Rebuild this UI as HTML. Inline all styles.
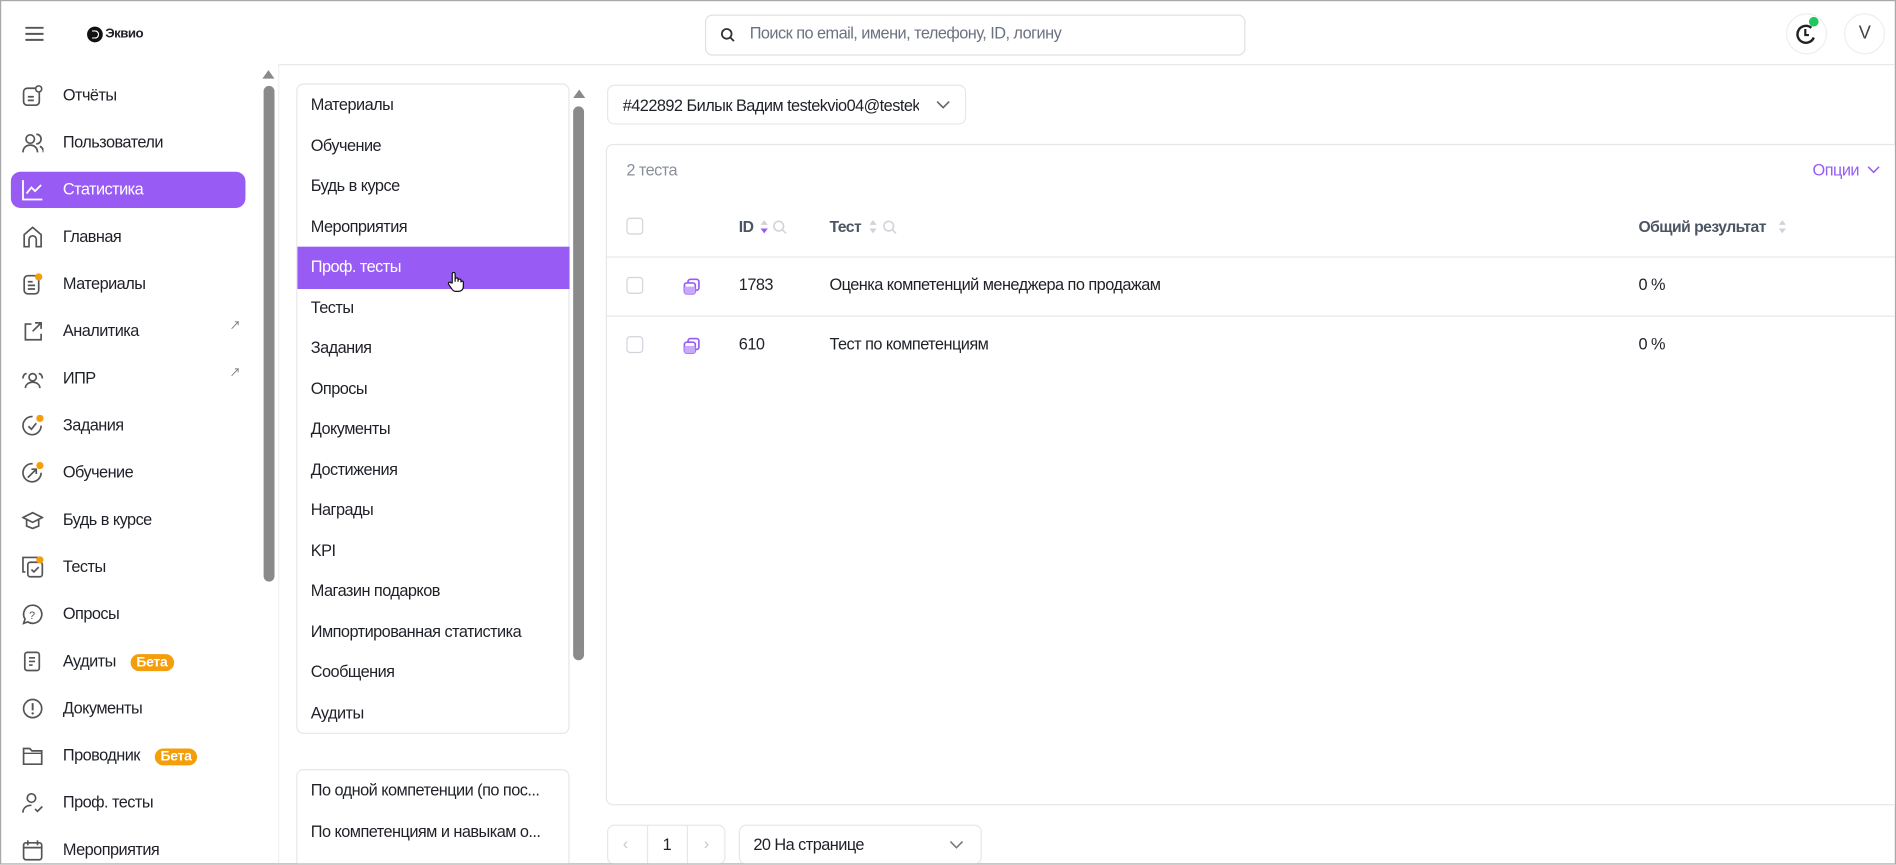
<!DOCTYPE html>
<html><head><meta charset="utf-8"><style>
*{box-sizing:border-box;margin:0;padding:0}
html,body{width:1896px;height:865px;overflow:hidden;background:#fff}
#w{position:absolute;left:0;top:0;width:1568px;height:715px;transform:scale(1.20918);transform-origin:0 0;font-family:"Liberation Sans","Noto Sans CJK SC",sans-serif;color:#1f2128;font-size:13.5px;letter-spacing:-0.45px;border:1px solid #a9a9a9;overflow:hidden}
.a{position:absolute}
.nav{position:absolute;left:8px;width:194px;height:30px;border-radius:8px}
.nav svg{position:absolute;left:9px;top:6px}
.nav > span{position:absolute;left:43px;top:7px;white-space:nowrap}
.beta{display:inline-block;background:#f59e0b;color:#fff;font-size:11.5px;font-weight:bold;border-radius:9px;padding:1px 5px;margin-left:8px;letter-spacing:-0.2px}
.li{position:absolute;left:11px}
.bx{position:absolute;border:1px solid #e5e7eb;border-radius:6px;background:#fff}
.cb{position:absolute;width:14px;height:14px;border:1px solid #d1d5db;border-radius:3px;background:#fff}
.hl{position:absolute;left:0;right:0;height:1px;background:#e5e7eb}
</style></head><body><div id="w">
<svg class="a" style="left:19px;top:20px" width="17" height="14"><path d="M1 2h15M1 7h15M1 12h15" stroke="#555" stroke-width="1.6"/></svg>
<div class="a" style="left:71px;top:21px;width:13px;height:13px;border-radius:50%;background:#111"></div>
<div class="a" style="left:75px;top:24px;width:6px;height:7px;border:1.5px solid #fff;border-left:none;border-radius:0 4px 4px 0"></div>
<div class="a" style="left:86px;top:21px;font-size:11px;font-weight:bold">Эквио</div>
<div class="bx" style="left:582px;top:11px;width:447px;height:34px;border-color:#dfe1e5"></div>
<svg class="a" style="left:595px;top:22px" width="12" height="12"><circle cx="5" cy="5" r="4" fill="none" stroke="#333" stroke-width="1.5"/><path d="M8 8l3 3" stroke="#333" stroke-width="1.5"/></svg>
<div class="a" style="left:619px;top:19px;color:#6b7280">Поиск по email, имени, телефону, ID, логину</div>
<div class="a" style="left:1476px;top:10px;width:34px;height:34px;border-radius:50%;border:1px solid #eceef0"></div>
<svg class="a" style="left:1484px;top:18px" width="18" height="18"><path d="M13 4A7 7 0 1 0 15 12" fill="none" stroke="#222" stroke-width="2"/><path d="M8 5v5h3" fill="none" stroke="#222" stroke-width="1.8"/></svg>
<div class="a" style="left:1495px;top:13px;width:8px;height:8px;border-radius:50%;background:#22c55e"></div>
<div class="a" style="left:1524px;top:10px;width:34px;height:34px;border-radius:50%;border:1px solid #eceef0;text-align:center;line-height:32px;font-size:15px;color:#444">V</div>
<div class="a" style="left:229px;top:52px;width:1340px;height:1px;background:#e5e7eb"></div>
<div class="a" style="left:229px;top:52px;width:1px;height:670px;background:#eef0f2"></div>
<div class="a" style="left:216px;top:57px;width:0;height:0;border-left:5px solid transparent;border-right:5px solid transparent;border-bottom:7px solid #8a8a8a"></div>
<div class="a" style="left:217px;top:70px;width:9px;height:410px;border-radius:5px;background:#8a8a8a"></div>
<div class="nav" style="top:63px"><svg width="18" height="18"><rect x="1.5" y="3" width="13" height="14" rx="3" fill="none" stroke="#555" stroke-width="1.4"/><path d="M5 10h5M5 13h5" stroke="#555" stroke-width="1.4"/><circle cx="14" cy="3.5" r="2.5" fill="#fff" stroke="#555" stroke-width="1.3"/></svg><span>Отчёты</span></div>
<div class="nav" style="top:102px"><svg width="18" height="18"><circle cx="7" cy="6" r="3.5" fill="none" stroke="#555" stroke-width="1.4"/><path d="M1 17c0-4 3-6 6-6s6 2 6 6M12 2a4 4 0 0 1 0 8M15 12c2 1 3 3 3 5" fill="none" stroke="#555" stroke-width="1.4"/></svg><span>Пользователи</span></div>
<div class="nav" style="top:141px;background:#985cf5;color:#fff"><svg width="18" height="18"><path d="M1 1v16h16M4 12l4-5 3 3 5-5" fill="none" stroke="#fff" stroke-width="1.5"/></svg><span>Статистика</span></div>
<div class="nav" style="top:180px"><svg width="18" height="18"><path d="M2 17V7l7-6 7 6v10h-4v-6a3 3 0 0 0-6 0v6z" fill="none" stroke="#555" stroke-width="1.4"/></svg><span>Главная</span></div>
<div class="nav" style="top:219px"><svg width="18" height="18"><rect x="2" y="2" width="12" height="15" rx="3" fill="none" stroke="#555" stroke-width="1.4"/><path d="M5 7h4M5 10h6M5 13h6" stroke="#555" stroke-width="1.4"/><circle cx="14" cy="3" r="3" fill="#f59e0b"/></svg><span>Материалы</span></div>
<div class="nav" style="top:258px"><svg width="18" height="18"><path d="M8 3H3v13h13v-5M11 2h5v5M16 2l-7 7" fill="none" stroke="#555" stroke-width="1.4"/></svg><span>Аналитика</span></div>
<div class="a" style="left:189px;top:261px;font-size:9px;color:#666">↗</div>
<div class="nav" style="top:297px"><svg width="18" height="18"><circle cx="9" cy="8" r="3" fill="none" stroke="#555" stroke-width="1.4"/><path d="M3 17c0-3 3-5 6-5s6 2 6 5M1 9c0-2 1-4 3-4M17 9c0-2-1-4-3-4" fill="none" stroke="#555" stroke-width="1.4"/></svg><span>ИПР</span></div>
<div class="a" style="left:189px;top:300px;font-size:9px;color:#666">↗</div>
<div class="nav" style="top:336px"><svg width="18" height="18"><path d="M16 9A7.5 7.5 0 1 1 9 1.5" fill="none" stroke="#555" stroke-width="1.4"/><path d="M5.5 9.5l2.5 2.5 4-5" fill="none" stroke="#555" stroke-width="1.4"/><circle cx="15" cy="3" r="3" fill="#f59e0b"/></svg><span>Задания</span></div>
<div class="nav" style="top:375px"><svg width="18" height="18"><path d="M16 9A7.5 7.5 0 1 1 9 1.5" fill="none" stroke="#555" stroke-width="1.4"/><path d="M5 13l7-7M8 6h4v4" fill="none" stroke="#555" stroke-width="1.4"/><circle cx="15" cy="3" r="3" fill="#f59e0b"/></svg><span>Обучение</span></div>
<div class="nav" style="top:414px"><svg width="18" height="18"><path d="M1 7l8-4 8 4-8 4zM4 9v5l5 2 5-2V9" fill="none" stroke="#555" stroke-width="1.4"/></svg><span>Будь в курсе</span></div>
<div class="nav" style="top:453px"><svg width="18" height="18"><path d="M3 13H1V1h12v2" fill="none" stroke="#555" stroke-width="1.4"/><rect x="5" y="5" width="12" height="12" rx="2" fill="none" stroke="#555" stroke-width="1.4"/><path d="M8 11l2 2 4-4" fill="none" stroke="#555" stroke-width="1.4"/><circle cx="15" cy="3" r="3" fill="#f59e0b"/></svg><span>Тесты</span></div>
<div class="nav" style="top:492px"><svg width="18" height="18"><path d="M9 1.5a7.5 7.5 0 1 1-4 13.8L1.5 16.5 2.7 13A7.5 7.5 0 0 1 9 1.5z" fill="none" stroke="#555" stroke-width="1.4"/><text x="6" y="13" font-size="9" fill="#555" font-family="Liberation Sans">?</text></svg><span>Опросы</span></div>
<div class="nav" style="top:531px"><svg width="18" height="18"><rect x="2.5" y="1.5" width="12" height="15" rx="2" fill="none" stroke="#555" stroke-width="1.4"/><path d="M6 6h5M6 9h5M6 12h3" stroke="#555" stroke-width="1.4"/></svg><span>Аудиты<b class="beta" style="margin-left:12px">Бета</b></span></div>
<div class="nav" style="top:570px"><svg width="18" height="18"><circle cx="9" cy="9" r="7.5" fill="none" stroke="#555" stroke-width="1.4"/><path d="M9 4.5v6" stroke="#555" stroke-width="1.6"/><circle cx="9" cy="13" r="1" fill="#555"/></svg><span>Документы</span></div>
<div class="nav" style="top:609px"><svg width="18" height="18"><path d="M1.5 3h5l2 2h8v11h-15z" fill="none" stroke="#555" stroke-width="1.4"/><path d="M1.5 7h15" stroke="#555" stroke-width="1.2"/></svg><span>Проводник<b class="beta" style="margin-left:12px">Бета</b></span></div>
<div class="nav" style="top:648px"><svg width="18" height="18"><circle cx="8" cy="5" r="3.5" fill="none" stroke="#555" stroke-width="1.4"/><path d="M1 17c0-4 3-6 7-6M11 14l2 2 4-4" fill="none" stroke="#555" stroke-width="1.4"/></svg><span>Проф. тесты</span></div>
<div class="nav" style="top:687px"><svg width="18" height="18"><rect x="1.5" y="3" width="15" height="14" rx="2" fill="none" stroke="#555" stroke-width="1.4"/><path d="M1.5 7h15M5 1v4M13 1v4" stroke="#555" stroke-width="1.4"/></svg><span>Мероприятия</span></div>
<div class="bx" style="left:244px;top:68px;width:226px;height:538px">
<div class="li" style="top:9px">Материалы</div>
<div class="li" style="top:43px">Обучение</div>
<div class="li" style="top:76px">Будь в курсе</div>
<div class="li" style="top:110px">Мероприятия</div>
<div class="a" style="left:0;top:134px;width:225px;height:35px;background:#985cf5;color:#fff;padding:9px 11px">Проф. тесты</div>
<svg class="a" style="left:124px;top:154px" width="14" height="18"><path d="M4 10V2.5a1.2 1.2 0 0 1 2.4 0V9V7a1.2 1.2 0 0 1 2.4 0v2V8a1.2 1.2 0 0 1 2.4 0v1.5a1 1 0 0 1 2 0V13c0 2.5-2 4-4 4H7c-2 0-3-1-4-3L1 11a1 1 0 0 1 2-1z" fill="#fff" stroke="#111" stroke-width="1"/></svg>
<div class="li" style="top:177px">Тесты</div>
<div class="li" style="top:210px">Задания</div>
<div class="li" style="top:244px">Опросы</div>
<div class="li" style="top:277px">Документы</div>
<div class="li" style="top:311px">Достижения</div>
<div class="li" style="top:344px">Награды</div>
<div class="li" style="top:378px">KPI</div>
<div class="li" style="top:411px">Магазин подарков</div>
<div class="li" style="top:445px">Импортированная статистика</div>
<div class="li" style="top:478px">Сообщения</div>
<div class="li" style="top:512px">Аудиты</div>
</div>
<div class="a" style="left:473px;top:73px;width:0;height:0;border-left:5px solid transparent;border-right:5px solid transparent;border-bottom:7px solid #8a8a8a"></div>
<div class="a" style="left:473px;top:87px;width:9px;height:458px;border-radius:5px;background:#8a8a8a"></div>
<div class="bx" style="left:244px;top:635px;width:226px;height:100px">
<div class="li" style="top:9px">По одной компетенции (по пос...</div>
<div class="li" style="top:43px">По компетенциям и навыкам о...</div>
</div>
<div class="bx" style="left:501px;top:69px;width:297px;height:33px"><div class="a" style="left:12px;top:9px;width:245px;overflow:hidden;white-space:nowrap">#422892 Билык Вадим testekvio04@testekvio</div>
<svg class="a" style="left:271px;top:12px" width="12" height="8"><path d="M1 1l5 5 5-5" fill="none" stroke="#666" stroke-width="1.3"/></svg></div>
<div class="bx" style="left:500px;top:118px;width:1080px;height:547px;border-radius:6px 0 0 6px">
<div class="a" style="left:16px;top:13px;color:#8a8f98">2 теста</div>
<div class="a" style="left:997px;top:13px;color:#985cf5">Опции</div>
<svg class="a" style="left:1042px;top:17px" width="11" height="7"><path d="M1 1l4.5 4.5L10 1" fill="none" stroke="#985cf5" stroke-width="1.3"/></svg>
<div class="cb" style="left:16px;top:60px"></div>
<div class="a" style="left:109px;top:60px;color:#4b5563;font-weight:bold;font-size:13px">ID</div>
<svg class="a" style="left:126px;top:61px" width="24" height="14"><path d="M1 5l3-4 3 4z" fill="#cfd3da"/><path d="M1 8l3 4 3-4z" fill="#985cf5"/><circle cx="16" cy="6" r="4" fill="none" stroke="#cfd3da" stroke-width="1.3"/><path d="M19 9l3 3" stroke="#cfd3da" stroke-width="1.3"/></svg>
<div class="a" style="left:184px;top:60px;color:#4b5563;font-weight:bold;font-size:13px">Тест</div>
<svg class="a" style="left:216px;top:61px" width="26" height="14"><path d="M1 5l3-4 3 4z" fill="#cfd3da"/><path d="M1 8l3 4 3-4z" fill="#cfd3da"/><circle cx="17" cy="6" r="4" fill="none" stroke="#cfd3da" stroke-width="1.3"/><path d="M20 9l3 3" stroke="#cfd3da" stroke-width="1.3"/></svg>
<div class="a" style="left:853px;top:60px;color:#4b5563;font-weight:bold;font-size:13px">Общий результат</div>
<svg class="a" style="left:968px;top:61px" width="8" height="14"><path d="M1 5l3-4 3 4z" fill="#cfd3da"/><path d="M1 8l3 4 3-4z" fill="#cfd3da"/></svg>
<div class="hl" style="top:92px"></div>
<div class="cb" style="left:16px;top:109px"></div>
<svg class="a" style="left:63px;top:110px" width="14" height="14"><rect x="4" y="1" width="9" height="9" rx="2" fill="#fff" stroke="#985cf5" stroke-width="1.4"/><rect x="1" y="4" width="9" height="9" rx="2" fill="#fff" stroke="#985cf5" stroke-width="1.4"/><rect x="1" y="7" width="9" height="6" rx="1.5" fill="#c9a9fb"/></svg>
<div class="a" style="left:109px;top:108px">1783</div>
<div class="a" style="left:184px;top:108px">Оценка компетенций менеджера по продажам</div>
<div class="a" style="left:853px;top:108px">0 %</div>
<div class="hl" style="top:141px"></div>
<div class="cb" style="left:16px;top:158px"></div>
<svg class="a" style="left:63px;top:159px" width="14" height="14"><rect x="4" y="1" width="9" height="9" rx="2" fill="#fff" stroke="#985cf5" stroke-width="1.4"/><rect x="1" y="4" width="9" height="9" rx="2" fill="#fff" stroke="#985cf5" stroke-width="1.4"/><rect x="1" y="7" width="9" height="6" rx="1.5" fill="#c9a9fb"/></svg>
<div class="a" style="left:109px;top:157px">610</div>
<div class="a" style="left:184px;top:157px">Тест по компетенциям</div>
<div class="a" style="left:853px;top:157px">0 %</div>
</div>
<div class="bx" style="left:501px;top:681px;width:98px;height:33px;border-radius:6px">
<div class="a" style="left:32px;top:0;width:1px;height:33px;background:#e5e7eb"></div>
<div class="a" style="left:65px;top:0;width:1px;height:33px;background:#e5e7eb"></div>
<div class="a" style="left:12px;top:7px;color:#c5c9d0">‹</div>
<div class="a" style="left:45px;top:8px">1</div>
<div class="a" style="left:79px;top:7px;color:#c5c9d0">›</div>
</div>
<div class="bx" style="left:610px;top:681px;width:201px;height:33px"><div class="a" style="left:11px;top:8px">20 На странице</div>
<svg class="a" style="left:173px;top:12px" width="12" height="8"><path d="M1 1l5 5 5-5" fill="none" stroke="#777" stroke-width="1.3"/></svg></div>
</div></body></html>
